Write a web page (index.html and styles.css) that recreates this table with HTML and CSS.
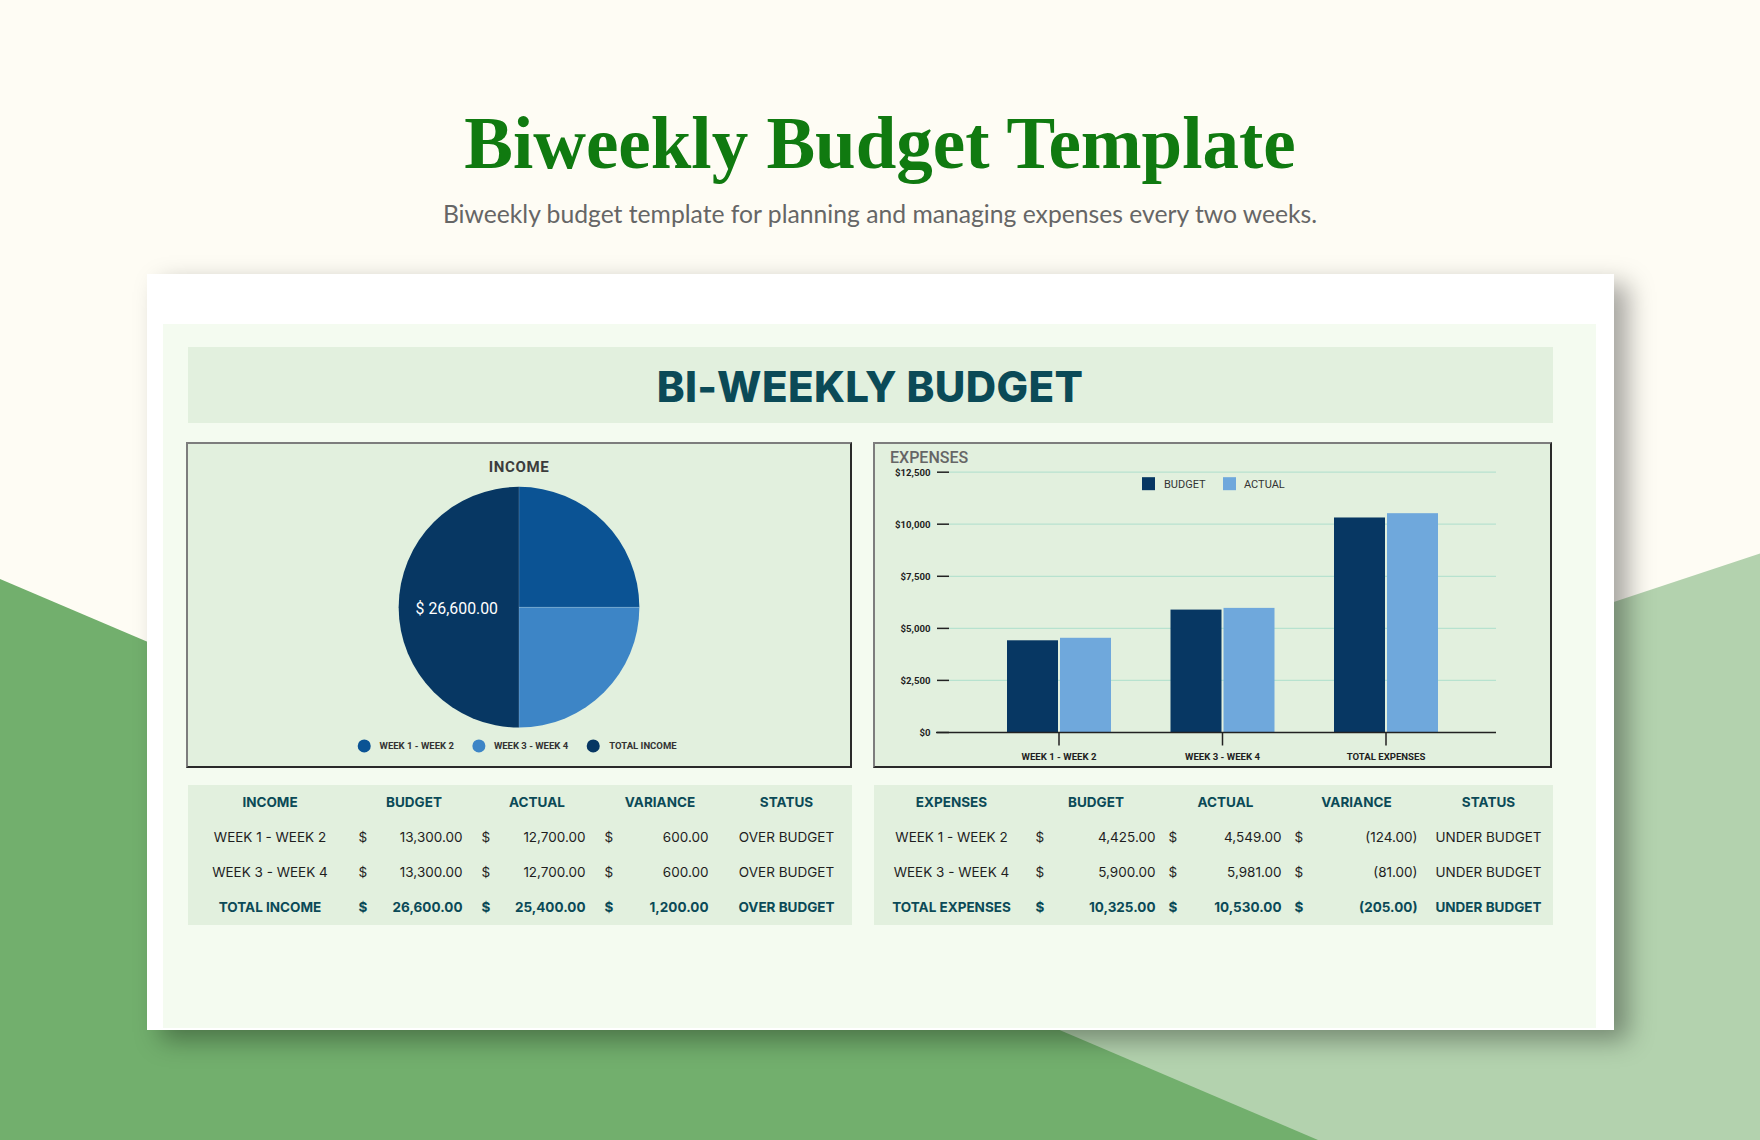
FILE: index.html
```html
<!DOCTYPE html>
<html lang="en">
<head>
<meta charset="utf-8">
<title>Biweekly Budget Template</title>
<link rel="stylesheet" href="styles.css">
</head>
<body>
<div class="page">
  <svg class="bg" viewBox="0 0 1760 1140" width="1760" height="1140" aria-hidden="true">
    <polygon points="1760,553.6 0,1136 0,1140 1760,1140" fill="#b3d2ae"/>
    <polygon points="0,579 1318,1140 0,1140" fill="#72af6d"/>
  </svg>

  <header class="hero">
    <h1 class="title">Biweekly Budget Template</h1>
    <p class="subtitle">Biweekly budget template for planning and managing expenses every two weeks.</p>
  </header>

  <main class="card">
    <div class="sheet">
      <div class="banner"><h2>BI-WEEKLY BUDGET</h2></div>

      <div class="charts">
        <section class="chart">
          <svg viewBox="0 0 660 321" width="660" height="321">
            <text class="pie-title" x="330" y="28" text-anchor="middle">INCOME</text>
            <path d="M330,162.7 L330,282.7 A120,120 0 0 1 330,42.7 Z" fill="#073763"/>
            <path d="M330,162.7 L330,42.7 A120,120 0 0 1 450,162.7 Z" fill="#0b5394"/>
            <path d="M330,162.7 L450,162.7 A120,120 0 0 1 330,282.7 Z" fill="#3d85c6"/>
            <line x1="330" y1="42.7" x2="330" y2="282.7" stroke="#ffffff" stroke-opacity="0.18" stroke-width="1"/>
            <line x1="330" y1="162.7" x2="450" y2="162.7" stroke="#ffffff" stroke-opacity="0.18" stroke-width="1"/>
            <text class="pie-label" x="268" y="169" text-anchor="middle">$ 26,600.00</text>
            <circle cx="175.7" cy="301" r="6.5" fill="#0b5394"/>
            <text class="pie-legend" x="191" y="304.4">WEEK 1 - WEEK 2</text>
            <circle cx="290" cy="301" r="6.5" fill="#3d85c6"/>
            <text class="pie-legend" x="305" y="304.4">WEEK 3 - WEEK 4</text>
            <circle cx="404" cy="301" r="6.5" fill="#073763"/>
            <text class="pie-legend" x="420" y="304.4">TOTAL INCOME</text>
          </svg>
        </section>

        <section class="chart">
          <svg viewBox="0 0 675 321" width="675" height="321">
            <text class="bar-title" x="15" y="19">EXPENSES</text>
            <g stroke="#b7e2cf" stroke-width="1.2">
              <line x1="74" y1="27.7" x2="621" y2="27.7"/>
              <line x1="74" y1="79.7" x2="621" y2="79.7"/>
              <line x1="74" y1="131.8" x2="621" y2="131.8"/>
              <line x1="74" y1="183.9" x2="621" y2="183.9"/>
              <line x1="74" y1="235.9" x2="621" y2="235.9"/>
            </g>
            <g stroke="#222" stroke-width="1.5">
              <line x1="62" y1="27.7" x2="74" y2="27.7"/>
              <line x1="62" y1="79.7" x2="74" y2="79.7"/>
              <line x1="62" y1="131.8" x2="74" y2="131.8"/>
              <line x1="62" y1="183.9" x2="74" y2="183.9"/>
              <line x1="62" y1="235.9" x2="74" y2="235.9"/>
            </g>
            <g class="axis-label" text-anchor="end">
              <text x="55.5" y="31.2">$12,500</text>
              <text x="55.5" y="83.2">$10,000</text>
              <text x="55.5" y="135.3">$7,500</text>
              <text x="55.5" y="187.4">$5,000</text>
              <text x="55.5" y="239.4">$2,500</text>
              <text x="55.5" y="291.5">$0</text>
            </g>
            <rect x="267" y="32.7" width="13" height="13" fill="#073763"/>
            <text class="bar-legend" x="289" y="43.7">BUDGET</text>
            <rect x="348" y="32.7" width="13" height="13" fill="#6fa8dc"/>
            <text class="bar-legend" x="369" y="43.7">ACTUAL</text>

            <rect x="132" y="195.8" width="51" height="92.2" fill="#073763"/>
            <rect x="185" y="193.3" width="51" height="94.7" fill="#6fa8dc"/>
            <rect x="295.5" y="165.1" width="51" height="122.9" fill="#073763"/>
            <rect x="348.5" y="163.4" width="51" height="124.6" fill="#6fa8dc"/>
            <rect x="459" y="73" width="51" height="215" fill="#073763"/>
            <rect x="512" y="68.7" width="51" height="219.3" fill="#6fa8dc"/>

            <g stroke="#222" stroke-width="1.5">
              <line x1="61" y1="288" x2="621" y2="288"/>
              <line x1="62" y1="288" x2="74" y2="288"/>
              <line x1="184" y1="288" x2="184" y2="301"/>
              <line x1="347.5" y1="288" x2="347.5" y2="301"/>
              <line x1="511" y1="288" x2="511" y2="301"/>
            </g>
            <g class="axis-label" text-anchor="middle">
              <text x="184" y="316">WEEK 1 - WEEK 2</text>
              <text x="347.5" y="316">WEEK 3 - WEEK 4</text>
              <text x="511" y="316">TOTAL EXPENSES</text>
            </g>
          </svg>
        </section>
      </div>

      <div class="tables">
        <div class="table income-table">
          <div class="row head">
            <div class="cell">INCOME</div><div class="cell">BUDGET</div><div class="cell">ACTUAL</div><div class="cell">VARIANCE</div><div class="cell">STATUS</div>
          </div>
          <div class="row">
            <div class="cell">WEEK 1 - WEEK 2</div>
            <div class="cell money"><span>$</span><span>13,300.00</span></div>
            <div class="cell money"><span>$</span><span>12,700.00</span></div>
            <div class="cell money"><span>$</span><span>600.00</span></div>
            <div class="cell">OVER BUDGET</div>
          </div>
          <div class="row">
            <div class="cell">WEEK 3 - WEEK 4</div>
            <div class="cell money"><span>$</span><span>13,300.00</span></div>
            <div class="cell money"><span>$</span><span>12,700.00</span></div>
            <div class="cell money"><span>$</span><span>600.00</span></div>
            <div class="cell">OVER BUDGET</div>
          </div>
          <div class="row total">
            <div class="cell">TOTAL INCOME</div>
            <div class="cell money"><span>$</span><span>26,600.00</span></div>
            <div class="cell money"><span>$</span><span>25,400.00</span></div>
            <div class="cell money"><span>$</span><span>1,200.00</span></div>
            <div class="cell">OVER BUDGET</div>
          </div>
        </div>

        <div class="table expense-table">
          <div class="row head">
            <div class="cell">EXPENSES</div><div class="cell">BUDGET</div><div class="cell">ACTUAL</div><div class="cell">VARIANCE</div><div class="cell">STATUS</div>
          </div>
          <div class="row">
            <div class="cell">WEEK 1 - WEEK 2</div>
            <div class="cell money"><span>$</span><span>4,425.00</span></div>
            <div class="cell money"><span>$</span><span>4,549.00</span></div>
            <div class="cell money"><span>$</span><span>(124.00)</span></div>
            <div class="cell">UNDER BUDGET</div>
          </div>
          <div class="row">
            <div class="cell">WEEK 3 - WEEK 4</div>
            <div class="cell money"><span>$</span><span>5,900.00</span></div>
            <div class="cell money"><span>$</span><span>5,981.00</span></div>
            <div class="cell money"><span>$</span><span>(81.00)</span></div>
            <div class="cell">UNDER BUDGET</div>
          </div>
          <div class="row total">
            <div class="cell">TOTAL EXPENSES</div>
            <div class="cell money"><span>$</span><span>10,325.00</span></div>
            <div class="cell money"><span>$</span><span>10,530.00</span></div>
            <div class="cell money"><span>$</span><span>(205.00)</span></div>
            <div class="cell">UNDER BUDGET</div>
          </div>
        </div>
      </div>
    </div>
  </main>
</div>
</body>
</html>
```

FILE: styles.css
```css
html, body {
  margin: 0;
  padding: 0;
}

.page {
  position: relative;
  width: 1760px;
  height: 1140px;
  overflow: hidden;
  background: #fefcf4;
}

.bg {
  position: absolute;
  left: 0;
  top: 0;
  display: block;
}

.hero {
  position: relative;
  text-align: center;
  padding-top: 107px;
}

.title {
  margin: 0;
  font-family: "Liberation Serif", serif;
  font-weight: 700;
  font-size: 73px;
  line-height: 73px;
  color: #107a10;
}

.subtitle {
  margin: 20px 0 0;
  font-family: Lato, "Liberation Sans", sans-serif;
  font-weight: 400;
  font-size: 24.7px;
  line-height: 28.8px;
  color: #666666;
}

.card {
  position: relative;
  box-sizing: border-box;
  width: 1467px;
  height: 756px;
  margin: 45px auto 0;
  padding: 50px 18px 2px 16px;
  background: #ffffff;
  box-shadow: 14px 10px 24px rgba(0, 0, 0, 0.35);
}

.sheet {
  box-sizing: border-box;
  height: 100%;
  padding: 23px 43px 0 25px;
  background: #f4fbf0;
}

.banner {
  height: 76px;
  background: #e2f0de;
  display: flex;
  align-items: center;
  justify-content: center;
}

.banner h2 {
  margin: 0;
  padding-top: 5px;
  font-family: Inter, "Liberation Sans", sans-serif;
  font-weight: 800;
  font-size: 42px;
  line-height: 1;
  letter-spacing: 0.4px;
  color: #0b4a57;
}

.charts {
  display: grid;
  grid-template-columns: 666px 679px;
  column-gap: 21px;
  height: 325px;
  margin: 19px 0 0 -2px;
}

.chart {
  background: #e2f0de;
  border: 2px solid;
  border-color: #7d7d7d #2a2a2a #2a2a2a #7d7d7d;
}

.chart svg {
  display: block;
  width: 100%;
  height: 100%;
}

.pie-title {
  font-family: Roboto, sans-serif;
  font-weight: 700;
  font-size: 15px;
  letter-spacing: 0.6px;
  fill: #3c3c3c;
}

.pie-label {
  font-family: Roboto, sans-serif;
  font-weight: 400;
  font-size: 15.8px;
  fill: #ffffff;
}

.pie-legend {
  font-family: Roboto, sans-serif;
  font-weight: 700;
  font-size: 9.5px;
  fill: #333333;
}

.bar-title {
  font-family: Roboto, sans-serif;
  font-weight: 500;
  font-size: 16px;
  fill: #666666;
}

.axis-label {
  font-family: Roboto, sans-serif;
  font-weight: 700;
  font-size: 9.6px;
  fill: #1f1f1f;
}

.bar-legend {
  font-family: Roboto, sans-serif;
  font-weight: 400;
  font-size: 11px;
  fill: #333333;
}

.tables {
  display: grid;
  grid-template-columns: 664px 679px;
  column-gap: 22px;
  margin-top: 18px;
}

.table {
  background: #e2f0de;
}

.row {
  display: grid;
  height: 35px;
  align-items: center;
  font-family: Inter, "Liberation Sans", sans-serif;
  font-weight: 400;
  font-size: 13.5px;
  color: #1e1e1e;
}

.income-table .row {
  grid-template-columns: 165px 123px 123px 123px 1fr;
}

.expense-table .row {
  grid-template-columns: 156px 133px 126px 136px 1fr;
}

.cell {
  text-align: center;
  white-space: nowrap;
}

.money {
  display: flex;
  justify-content: space-between;
  padding: 0 13px 0 6px;
}

.expense-table .money {
  padding: 0 7px 0 6px;
}

.head,
.total {
  font-weight: 700;
  color: #0b4a57;
}
```
